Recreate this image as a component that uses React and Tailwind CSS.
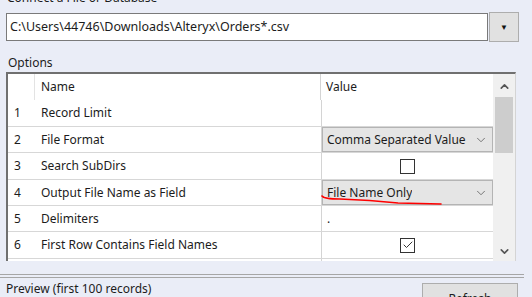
import { ChevronDown, ChevronUp, Check } from 'lucide-react'

const rows = [
  { n: 1, name: 'Record Limit', h: 'h-[27px]', value: null },
  { n: 2, name: 'File Format', h: 'h-[26px]', value: { type: 'combo', text: 'Comma Separated Value' } },
  { n: 3, name: 'Search SubDirs', h: 'h-[27px]', value: { type: 'check', checked: false } },
  { n: 4, name: 'Output File Name as Field', h: 'h-[26px]', value: { type: 'combo', text: 'File Name Only' } },
  { n: 5, name: 'Delimiters', h: 'h-[26px]', value: { type: 'text', text: '.' } },
  { n: 6, name: 'First Row Contains Field Names', h: 'h-[27px]', value: { type: 'check', checked: true } },
]

const Cell = ({ value }) => {
  if (!value) return null
  if (value.type === 'combo') {
    return (
      <div className="h-full flex items-center justify-between bg-[#e5e5e5] border border-[#b4b4b4] pl-[4px] pr-[4px]">
        <span className="whitespace-nowrap overflow-hidden">{value.text}</span>
        <ChevronDown className="w-[14px] h-[14px] text-[#666] shrink-0" strokeWidth={1.5} />
      </div>
    )
  }
  if (value.type === 'check') {
    return (
      <div className="h-full flex items-center justify-center">
        <div className="w-[15px] h-[15px] border border-[#333] bg-white flex items-center justify-center">
          {value.checked && <Check className="w-[12px] h-[12px] text-[#333]" strokeWidth={2} />}
        </div>
      </div>
    )
  }
  return <div className="h-full flex items-center pl-[5px]">{value.text}</div>
}

const App = () => {
  return (
    <div className="w-[532px] h-[297px] overflow-hidden bg-[#eaedf7] font-['Noto_Sans',sans-serif] text-[12px] text-[#1c1c1c] relative">
      <div className="-mt-[11px] ml-[7px] h-[18px] leading-[18px]">Connect a File or Database</div>

      <div className="flex items-center ml-[6px] mt-[5px]">
        <div className="w-[482px] h-[28px] bg-white border border-[#7a7a7a] flex items-center pl-[3px] text-[12.5px]">
          C:\Users\44746\Downloads\Alteryx\Orders*.csv
        </div>
        <div className="w-[30px] h-[30px] ml-[1px] bg-[#e1e1e1] border border-[#adadad] flex items-center justify-center">
          <span className="text-[8px] text-[#111]">▼</span>
        </div>
      </div>

      <div className="ml-[8px] mt-[13px] h-[16px] leading-[16px]">Options</div>

      <div className="ml-[6px] mt-[1px] w-[510px] h-[189px] border-t-2 border-l-2 border-[#707070] border-r border-r-[#d4d4d4] flex overflow-hidden bg-white">
        <div className="w-[485px] flex flex-col">
          <div className="flex h-[26px] shrink-0">
            <div className="w-[27px] border-r border-[#e3e3e3]" />
            <div className="w-[285px] pl-[6px] flex items-center">Name</div>
            <div className="w-[173px] border-l border-[#d4d4d4] pl-[5px] flex items-center">Value</div>
          </div>
          {rows.map((r) => (
            <div key={r.n} className={`flex shrink-0 ${r.h} border-b border-[#d7d7d7]`}>
              <div className="w-[27px] pl-[6px] flex items-center">{r.n}</div>
              <div className="w-[286px] pl-[6px] flex items-center">{r.name}</div>
              <div className="w-[172px] border-l border-[#d4d4d4]">
                <Cell value={r.value} />
              </div>
            </div>
          ))}
          <div className="flex flex-1">
            <div className="w-[313px]" />
            <div className="w-[172px] border-l border-[#d4d4d4]" />
          </div>
        </div>
        <div className="w-[22px] bg-[#f0f0f0] flex flex-col items-center">
          <ChevronUp className="w-[13px] h-[13px] mt-[6px] text-[#555]" strokeWidth={3} />
          <div className="w-[18px] h-[56px] bg-[#cdcdcd] mt-[4px]" />
          <div className="flex-1" />
          <ChevronDown className="w-[13px] h-[13px] mb-[3px] text-[#555]" strokeWidth={3} />
        </div>
      </div>

      <div className="mt-[13px] w-[524px] h-[4px] border-t border-b border-[#a6a6a6]" />

      <div className="flex justify-between items-start mt-[5px]">
        <div className="ml-[6px] leading-[14px] -mt-[1px]">Preview (first 100 records)</div>
        <div className="mr-[14px] w-[96px] h-[30px] bg-[#e1e1e1] border border-[#adadad] flex justify-center pt-[6px]">
          Refresh
        </div>
      </div>

      <svg className="absolute left-0 top-0 pointer-events-none" width="532" height="297">
        <path d="M322 196 Q324 199 340 199 Q370 200 398 203 L441 204" stroke="#ff0000" strokeWidth="1.6" fill="none" strokeLinecap="round" />
      </svg>
    </div>
  )
}

export default App
